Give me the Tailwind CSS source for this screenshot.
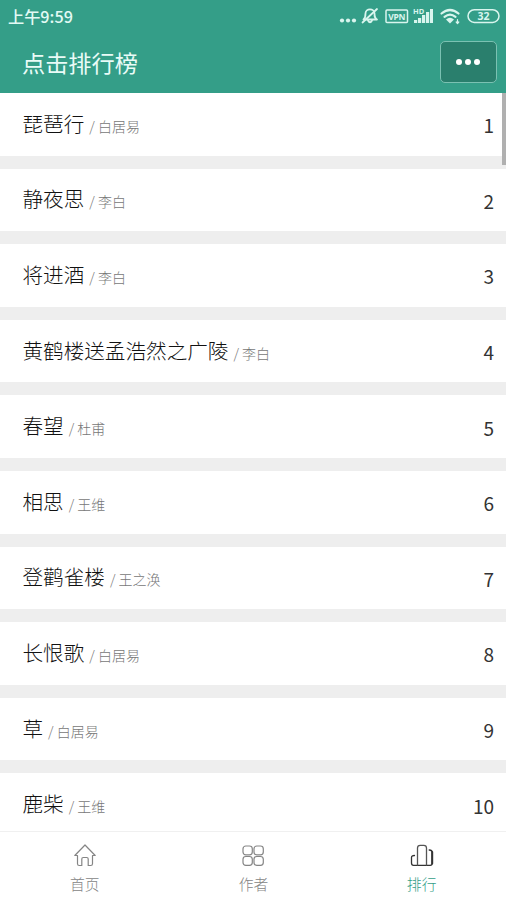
<!DOCTYPE html>
<html lang="zh-CN">
<head>
    <meta charset="UTF-8">
    <meta name="viewport" content="width=device-width, initial-scale=1.0">
    <title>点击排行榜</title>
    <script src="https://cdn.jsdelivr.net/npm/@tailwindcss/browser@4"></script>
</head>
<body class="bg-white font-['Noto_Sans_CJK_SC',sans-serif]">
    <div class="h-[900px] flex flex-col overflow-hidden">
        <header class="h-[93px] shrink-0 bg-[#349e88] text-white">
            <!-- Status bar -->
            <div class="h-8 flex items-center justify-between pl-2 pr-[6px]">
                <span class="text-[16.200px] leading-8 font-medium text-[#e2faf4]">上午9:59</span>
                <svg class="w-[162px] h-8 text-[#d9f5ee]" viewBox="338 0 162 32" fill="none" stroke="currentColor" stroke-width="1.5" stroke-linecap="round" stroke-linejoin="round">
                    <g fill="currentColor" stroke="none">
                        <circle cx="342" cy="20.5" r="2.1"/>
                        <circle cx="348" cy="20.5" r="2.1"/>
                        <circle cx="354" cy="20.5" r="2.1"/>
                    </g>
                    <!-- muted bell -->
                    <g stroke-width="1.800">
                        <path d="M363.500 19.500c2-1.500 2-3 2-6 0-5.500 9-5.500 9 0 0 3 0 4.500 2.500 6z"/>
                        <path d="M368 20.500q2 3.500 4 0M377 9L362.500 22.500"/>
                    </g>
                    <rect x="386" y="10" width="21.500" height="12.500" rx="1"/>
                    <text x="396.800" y="19.500" text-anchor="middle" font-family="Noto Sans" font-size="8.500" font-weight="700" fill="currentColor" stroke="none" textLength="17">VPN</text>
                    <text x="413" y="14" font-family="Noto Sans" font-size="7.500" font-weight="700" fill="currentColor" stroke="none">HD</text>
                    <g fill="currentColor" stroke="none">
                        <rect x="414" y="20" width="3.200" height="3"/>
                        <rect x="418" y="18" width="3.200" height="5"/>
                        <rect x="422" y="15" width="3.200" height="8"/>
                        <rect x="426" y="12" width="3.200" height="11"/>
                        <rect x="430" y="9" width="3" height="14"/>
                    </g>
                    <!-- wifi -->
                    <path stroke-width="2.200" d="M441.500 13.500q8.500-7 17 0M444.500 16.800q5.500-4.500 11 0"/>
                    <path fill="currentColor" stroke="none" d="M446 19.500q4-3.500 8 0l-4 4z"/>
                    <path stroke-width="1.200" d="M457.500 19.500v4M456.200 22l1.300 1.500 1.300-1.500"/>
                    <rect x="468" y="9.800" width="31" height="12.600" rx="6.300"/>
                    <text x="483.500" y="20" text-anchor="middle" font-family="Noto Sans" font-size="10.500" font-weight="700" fill="currentColor" stroke="none">32</text>
                </svg>
            </div>
            <!-- Title bar -->
            <div class="h-[60px] flex items-center justify-between pl-[22px] pr-[9px]">
                <h1 class="-mt-px text-[23.200px] leading-8 text-[#e9fbf7]">点击排行榜</h1>
                <button class="w-[57px] h-[42px] flex items-center justify-center gap-[3px] pr-px rounded-[5px] border border-[#7bc1b2] bg-[#2a7f6d]">
                    <span class="size-[6px] rounded-full bg-white"></span>
                    <span class="size-[6px] rounded-full bg-white"></span>
                    <span class="size-[6px] rounded-full bg-white"></span>
                </button>
            </div>
        </header>

        <main class="relative flex-1 min-h-0 overflow-hidden">
            <ul id="rankList"></ul>
            <!-- scroll thumb -->
            <div class="absolute top-0 right-0 w-1 h-[72px] bg-[#b0b0b0]"></div>
        </main>

        <nav class="h-[69px] shrink-0 grid grid-cols-3 border-t border-[#f0f0f0] text-[14.800px] text-[#858585]">
            <a class="flex flex-col items-center pt-[10px] pl-px">
                <svg class="size-[26px]" viewBox="0 0 26 26" fill="none" stroke="#858585" stroke-width="1.200" stroke-linejoin="round" stroke-linecap="round">
                    <path d="M2.800 13.500L13 3l10.200 10.500h-2.700v8.200q0 1.800-1.800 1.800h-2.500V17q0-1.500-1.500-1.500h-3.400q-1.500 0-1.500 1.500v6.500H7.300q-1.800 0-1.800-1.800v-8.200z"/>
                </svg>
                <span class="mt-[6px] leading-5 font-light">首页</span>
            </a>
            <a class="flex flex-col items-center pt-[10px] pl-px">
                <svg class="size-[26px]" viewBox="0 0 26 26" fill="none" stroke="#858585" stroke-width="1.200">
                    <rect x="3" y="4" width="9.300" height="8.800" rx="2.800"/>
                    <rect x="14" y="4" width="9.300" height="8.800" rx="2.800"/>
                    <rect x="3" y="14.500" width="9.300" height="8.800" rx="2.800"/>
                    <rect x="14" y="14.500" width="9.300" height="8.800" rx="2.800"/>
                </svg>
                <span class="mt-[6px] leading-5 font-light">作者</span>
            </a>
            <a class="flex flex-col items-center pt-[10px] text-[#349e88]">
                <svg class="size-[26px]" viewBox="0 0 26 26" fill="none" stroke="#333" stroke-width="1.300" stroke-linejoin="round" stroke-linecap="round">
                    <path d="M5.500 13.500q-3 0-3 2V21q0 2.300 2 2.300h16.700q2 0 2-2.300V10.500q0-2.500-3-2.500"/>
                    <path stroke="#555" d="M8.500 23V6q0-2.700 2.700-2.700h3.600q2.700 0 2.700 2.700v17"/>
                    <path stroke-width="2" d="M23.200 10v11.500"/>
                </svg>
                <span class="mt-[6px] leading-5 font-light">排行</span>
            </a>
        </nav>
    </div>

    <script>
        const poems = [
            ['琵琶行', '白居易'],
            ['静夜思', '李白'],
            ['将进酒', '李白'],
            ['黄鹤楼送孟浩然之广陵', '李白'],
            ['春望', '杜甫'],
            ['相思', '王维'],
            ['登鹳雀楼', '王之涣'],
            ['长恨歌', '白居易'],
            ['草', '白居易'],
            ['鹿柴', '王维']
        ];

        document.getElementById('rankList').innerHTML = poems.map(([title, author], index) => `
            <li class="h-[75.600px] flex flex-col">
                <div class="h-[62.600px] flex items-center justify-between pl-[22.500px] pr-3">
                    <div class="flex items-baseline whitespace-pre text-[20.600px] leading-8 font-light text-[#111]">${title}<span class="ml-[5px] text-[14px] text-[#777]">/ ${author}</span></div>
                    <span class="mt-[2px] text-[19px] leading-8 text-[#333]">${index + 1}</span>
                </div>
                <div class="flex-1 bg-[#eee]"></div>
            </li>
        `).join('');
    </script>
</body>
</html>
